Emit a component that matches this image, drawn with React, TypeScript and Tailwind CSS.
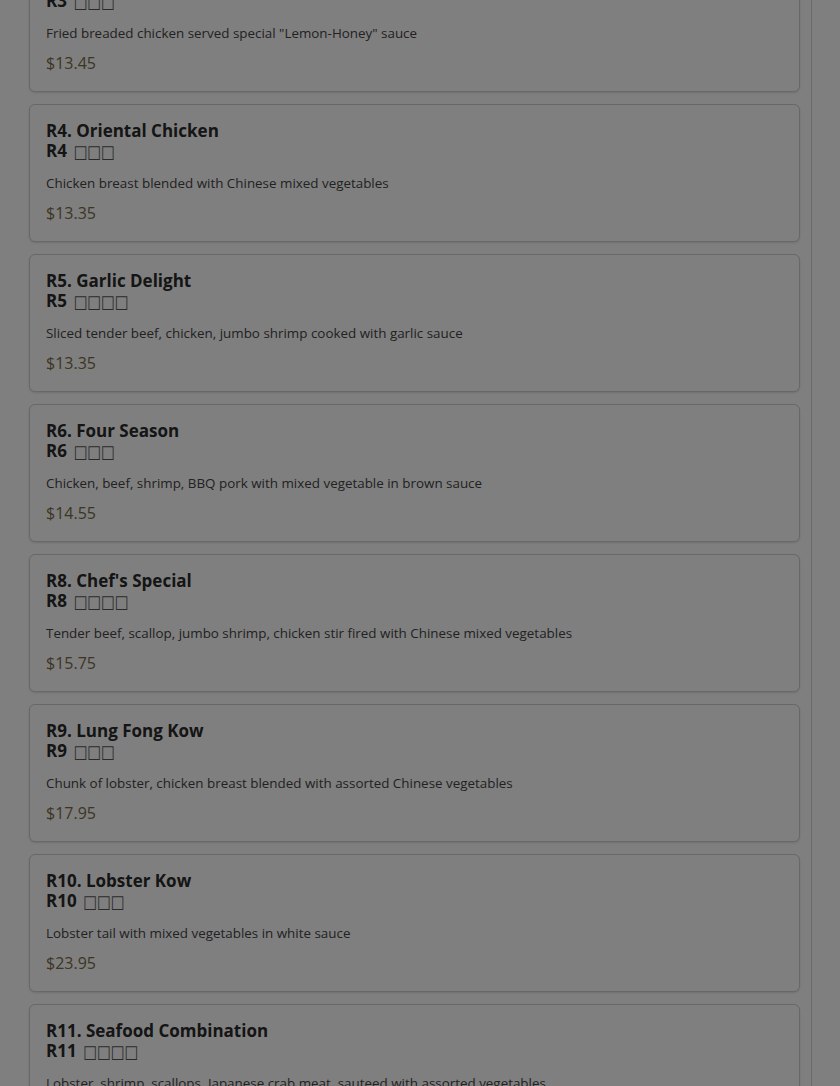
const items = [
  { name: "R3. Lemon Chicken", code: "R3", zh: "□□□", desc: 'Fried breaded chicken served special "Lemon-Honey" sauce', price: "$13.45" },
  { name: "R4. Oriental Chicken", code: "R4", zh: "□□□", desc: "Chicken breast blended with Chinese mixed vegetables", price: "$13.35" },
  { name: "R5. Garlic Delight", code: "R5", zh: "□□□□", desc: "Sliced tender beef, chicken, jumbo shrimp cooked with garlic sauce", price: "$13.35" },
  { name: "R6. Four Season", code: "R6", zh: "□□□", desc: "Chicken, beef, shrimp, BBQ pork with mixed vegetable in brown sauce", price: "$14.55" },
  { name: "R8. Chef's Special", code: "R8", zh: "□□□□", desc: "Tender beef, scallop, jumbo shrimp, chicken stir fired with Chinese mixed vegetables", price: "$15.75" },
  { name: "R9. Lung Fong Kow", code: "R9", zh: "□□□", desc: "Chunk of lobster, chicken breast blended with assorted Chinese vegetables", price: "$17.95" },
  { name: "R10. Lobster Kow", code: "R10", zh: "□□□", desc: "Lobster tail with mixed vegetables in white sauce", price: "$23.95" },
  { name: "R11. Seafood Combination", code: "R11", zh: "□□□□", desc: "Lobster, shrimp, scallops, Japanese crab meat, sauteed with assorted vegetables", price: "$24.95" },
];

function MenuCard({ name, code, zh, desc, price }: (typeof items)[number]) {
  return (
    <div className="h-[138px] shrink-0 rounded-md border border-[#d0d0d0] bg-white px-4 pt-4 shadow-sm">
      <h3 className="text-[17px] leading-5 font-bold text-[#2a2a2a]">{name}</h3>
      <p className="text-[17px] leading-5 font-bold text-[#2a2a2a]">
        {code}{" "}
        <span className="ml-0.5 inline-block scale-y-125 font-['DejaVu_Sans',sans-serif] text-[14.5px] leading-4 font-normal text-[#555]">{zh}</span>
      </p>
      <p className="mt-3 text-[13.4px] leading-5 text-[#444]">{desc}</p>
      <p className="mt-2 text-[16px] leading-6 text-[#7b6c45]">{price}</p>
    </div>
  );
}

export default function App() {
  return (
    <div className="relative h-[1086px] overflow-hidden bg-white font-['Open_Sans',sans-serif]">
      <div className="flex h-full w-[812px] flex-col border-r border-[#d4d4d4] pl-[29px] pr-[11px]">
        <div className="-mt-[46px] flex flex-col gap-3">
          {items.map((item, i) => (
            <MenuCard key={i} {...item} />
          ))}
        </div>
      </div>
      <div className="absolute inset-0 bg-black/50"></div>
    </div>
  );
}
